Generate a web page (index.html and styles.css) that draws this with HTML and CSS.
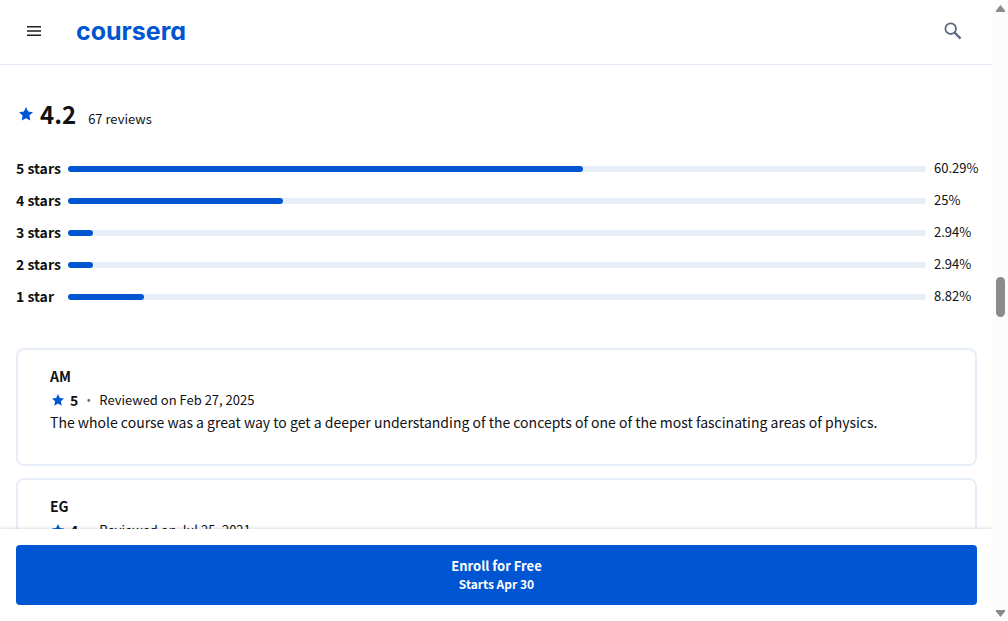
FILE: index.html
```html
<!DOCTYPE html>
<html lang="en">
<head>
<meta charset="utf-8">
<meta name="viewport" content="width=device-width, initial-scale=1">
<title>Learner reviews | Coursera</title>
<link rel="stylesheet" href="styles.css">
</head>
<body>
<div class="page">
  <header class="header">
    <button class="icon-button" type="button" aria-label="Open menu">
      <svg width="14" height="10" viewBox="0 0 14 10" aria-hidden="true"><path d="M0 .75h14M0 5h14M0 9.25h14" stroke="#1f1f1f" stroke-width="1.3"/></svg>
    </button>
    <a class="logo" href="#">coursera</a>
    <button class="icon-button search" type="button" aria-label="Search">
      <svg width="18" height="18" viewBox="0 0 18 18" fill="none" stroke="#5b6780" aria-hidden="true"><circle cx="6.7" cy="6.7" r="5.3" stroke-width="1.8"/><path d="M10.6 10.6l6 6" stroke-width="2.2"/></svg>
    </button>
  </header>

  <main class="content">
    <div class="summary">
      <svg class="star" width="14" height="14" viewBox="0 0 14 14" aria-hidden="true"><path d="M7 0l2.1 4.6 4.9.6-3.6 3.4.9 5L7 11.200l-4.300 2.400.9-5L0 5.200l4.900-.6z"/></svg>
      <span class="score">4.2</span>
      <span class="count">67 reviews</span>
    </div>

    <ul class="ratings">
      <li class="rating"><span class="label">5 stars</span><span class="track"><span class="fill" style="width:60%"></span></span><span class="percent">60.29%</span></li>
      <li class="rating"><span class="label">4 stars</span><span class="track"><span class="fill" style="width:25%"></span></span><span class="percent">25%</span></li>
      <li class="rating"><span class="label">3 stars</span><span class="track"><span class="fill" style="width:2.94%"></span></span><span class="percent">2.94%</span></li>
      <li class="rating"><span class="label">2 stars</span><span class="track"><span class="fill" style="width:2.94%"></span></span><span class="percent">2.94%</span></li>
      <li class="rating"><span class="label">1 star</span><span class="track"><span class="fill" style="width:8.82%"></span></span><span class="percent">8.82%</span></li>
    </ul>

    <div class="reviews">
      <article class="review">
        <h3 class="author">AM</h3>
        <div class="meta">
          <svg class="star" width="12" height="12" viewBox="0 0 14 14" aria-hidden="true"><path d="M7 0l2.1 4.6 4.9.6-3.6 3.4.9 5L7 11.200l-4.300 2.400.9-5L0 5.200l4.900-.6z"/></svg>
          <span class="stars">5</span><span class="dot">·</span><span>Reviewed on Feb 27, 2025</span>
        </div>
        <p class="text">The whole course was a great way to get a deeper understanding of the concepts of one of the most fascinating areas of physics.</p>
      </article>
      <article class="review">
        <h3 class="author">EG</h3>
        <div class="meta">
          <svg class="star" width="12" height="12" viewBox="0 0 14 14" aria-hidden="true"><path d="M7 0l2.1 4.6 4.9.6-3.6 3.4.9 5L7 11.200l-4.300 2.400.9-5L0 5.200l4.900-.6z"/></svg>
          <span class="stars">4</span><span class="dot">·</span><span>Reviewed on Jul 25, 2021</span>
        </div>
      </article>
    </div>
  </main>

  <footer class="enroll-bar">
    <button class="enroll" type="button">
      <span class="enroll-title">Enroll for Free</span>
      <span class="enroll-date">Starts Apr 30</span>
    </button>
  </footer>
</div>
<div class="scrollbar" aria-hidden="true">
  <svg width="9" height="7" viewBox="0 0 9 7"><path d="M4.500 0L9 5.500V7H0V5.500z"/></svg>
  <span class="thumb"></span>
  <svg width="9" height="7" viewBox="0 0 9 7"><path d="M0 0h9v1.500L4.500 7 0 1.500z"/></svg>
</div>
</body>
</html>
```
FILE: styles.css
```css
* {
  box-sizing: border-box;
}

body {
  display: grid;
  grid-template-columns: minmax(0, 1fr) 15px;
  height: 100vh;
  margin: 0;
  overflow: hidden;
  background: #fff;
  color: #0f1114;
  font-family: "Noto Sans CJK SC", "Noto Sans", sans-serif;
  font-size: 16px;
  line-height: 24px;
}

button {
  padding: 0;
  border: 0;
  background: none;
  font: inherit;
  cursor: pointer;
}

.page {
  display: flex;
  flex-direction: column;
  min-height: 0;
}

.header {
  display: flex;
  flex: none;
  align-items: center;
  gap: 24px;
  height: 65px;
  padding: 0 24px 2px 16px;
  border-bottom: 1px solid #e3ebf8;
}

.icon-button {
  display: grid;
  place-items: center;
  width: 36px;
  height: 36px;
}

.search {
  width: 32px;
  margin-left: auto;
}

.logo {
  color: #0056d2;
  font-family: Inter, sans-serif;
  font-size: 25px;
  font-weight: 700;
  font-feature-settings: "cv11";
  line-height: 32px;
  text-decoration: none;
}

.content {
  flex: 1;
  min-height: 0;
  padding: 32px 16px 0;
  overflow: hidden;
}

.star {
  flex: none;
  fill: #0056d2;
}

.summary {
  display: flex;
  align-items: center;
  height: 34px;
  padding-left: 3px;
}

.score {
  margin-left: 7px;
  font-size: 24px;
  font-weight: 700;
  line-height: 34px;
}

.count {
  margin-left: 12px;
  padding-top: 10px;
  font-size: 13px;
}

.ratings {
  display: grid;
  gap: 8px;
  margin: 26px 0 0;
  padding: 0;
  list-style: none;
}

.rating {
  display: grid;
  grid-template-columns: 44px minmax(0, 1fr) 43px;
  gap: 8px;
  height: 24px;
  line-height: 22px;
}

.label {
  font-size: 14px;
  font-weight: 700;
  white-space: nowrap;
}

.track {
  align-self: center;
  height: 6px;
  border-radius: 3px;
  background: #e8eef7;
}

.fill {
  display: block;
  height: 6px;
  border-radius: 3px;
  background: #0056d2;
}

.percent {
  font-size: 13px;
}

.reviews {
  display: grid;
  gap: 12px;
  margin-top: 39px;
}

.review {
  min-height: 118px;
  padding: 14px 32px;
  border: 2px solid #e8eef7;
  border-radius: 8px;
}

.author {
  margin: 0;
  font-size: 14px;
  font-weight: 700;
}

.meta {
  display: flex;
  align-items: center;
  padding-left: 2px;
  font-size: 13px;
}

.stars {
  margin-left: 6px;
  font-size: 14px;
  font-weight: 700;
}

.dot {
  width: 21px;
  color: #5b6780;
  text-align: center;
}

.text {
  margin: 0;
  font-size: 14px;
  line-height: 20px;
}

.enroll-bar {
  position: relative;
  flex: none;
  padding: 16px;
  background: #fff;
  box-shadow: 0 0 4px rgba(0, 0, 0, 0.2);
}

.enroll {
  display: flex;
  flex-direction: column;
  align-items: center;
  justify-content: center;
  width: 100%;
  height: 60px;
  border-radius: 4px;
  background: #0056d2;
  color: #fff;
  font-weight: 700;
  line-height: 18px;
}

.enroll-title {
  font-size: 13px;
}

.enroll-date {
  font-size: 12px;
}

.scrollbar {
  display: flex;
  z-index: 1;
  flex-direction: column;
  align-items: center;
  justify-content: space-between;
  padding: 5px 0 4px;
  background: #fcfcfc;
  fill: #8b8b8b;
}

.thumb {
  width: 9px;
  height: 40px;
  margin-bottom: 28px;
  border-radius: 5px;
  background: #8b8b8b;
}
```
